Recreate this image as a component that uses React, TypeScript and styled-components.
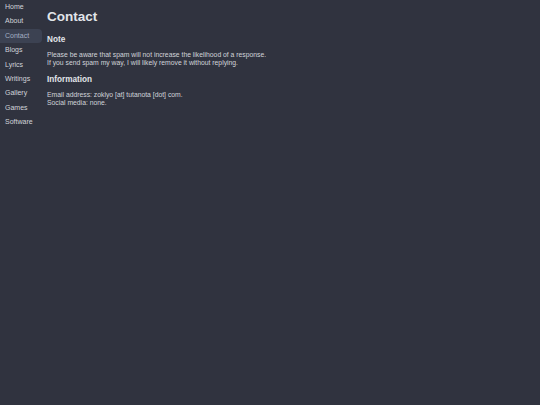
import styled, { createGlobalStyle } from "styled-components";

const GlobalStyle = createGlobalStyle`
  html, body {
    margin: 0;
    padding: 0;
    background: #30333f;
    height: 100%;
  }
  body {
    font-family: "Liberation Sans", Arial, sans-serif;
    color: #d0d3da;
  }
`;

const Page = styled.div`
  display: flex;
  align-items: flex-start;
  min-height: 405px;
`;

const Sidebar = styled.nav`
  display: flex;
  flex-direction: column;
  width: 42px;
`;

const NavItem = styled.a<{ $active?: boolean }>`
  display: block;
  padding: 0 0 0 5px;
  height: 14.4px;
  line-height: 14.4px;
  font-size: 7px;
  color: ${(p) => (p.$active ? "#a3aec4" : "#d0d3da")};
  background: ${(p) => (p.$active ? "#3c4252" : "transparent")};
  border-radius: 0 4px 4px 0;
  text-decoration: none;
  cursor: pointer;
`;

const Main = styled.main`
  padding-left: 5px;
  flex: 1;
`;

const Title = styled.h1`
  margin: 9px 0 0;
  font-size: 13.5px;
  line-height: 16px;
  font-weight: bold;
  color: #e2e5ea;
`;

const Heading = styled.h2`
  margin: 0;
  font-size: 8.2px;
  line-height: 10px;
  font-weight: bold;
  color: #e2e5ea;
`;

const Section = styled.section<{ $first?: boolean }>`
  margin-top: ${(p) => (p.$first ? "10px" : "8px")};
  display: flex;
  flex-direction: column;
  gap: 6px;
`;

const Text = styled.p`
  margin: 0;
  font-size: 6.8px;
  line-height: 8px;
`;

const items = ["Home", "About", "Contact", "Blogs", "Lyrics", "Writings", "Gallery", "Games", "Software"];

export default function App() {
  return (
    <>
      <GlobalStyle />
      <Page>
        <Sidebar>
          {items.map((it) => (
            <NavItem key={it} $active={it === "Contact"}>
              {it}
            </NavItem>
          ))}
        </Sidebar>
        <Main>
          <Title>Contact</Title>
          <Section $first>
            <Heading>Note</Heading>
            <Text>
              Please be aware that spam will not increase the likelihood of a response.
              <br />
              If you send spam my way, I will likely remove it without replying.
            </Text>
          </Section>
          <Section>
            <Heading>Information</Heading>
            <Text>
              Email address: zoklyo [at] tutanota [dot] com.
              <br />
              Social media: none.
            </Text>
          </Section>
        </Main>
      </Page>
    </>
  );
}
